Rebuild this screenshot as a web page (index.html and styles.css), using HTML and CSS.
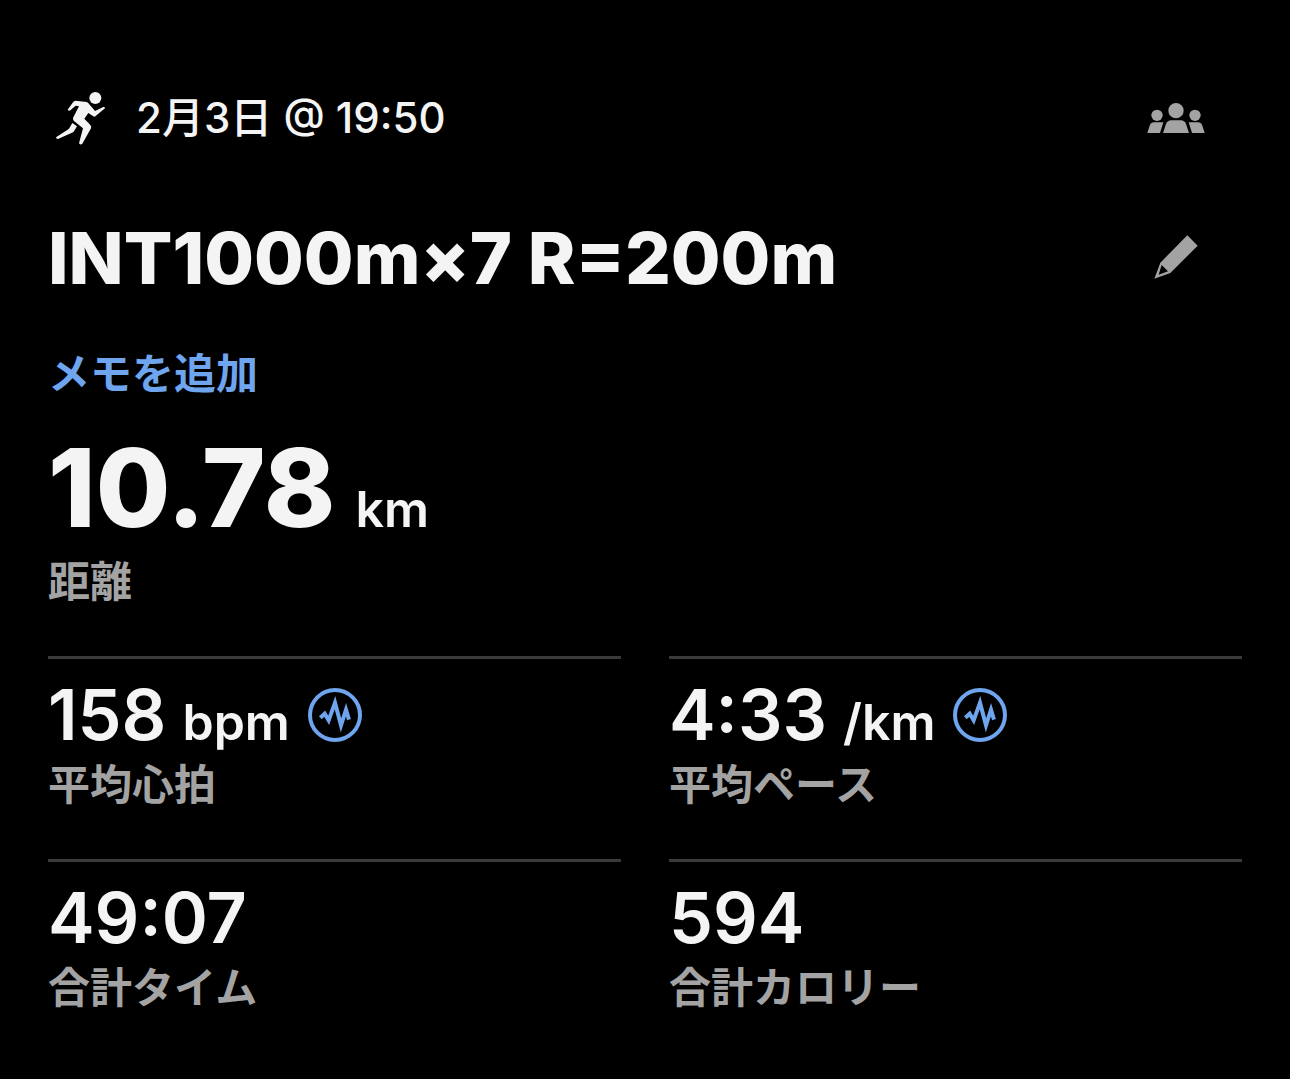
FILE: index.html
```html
<!DOCTYPE html>
<html lang="ja">
<head>
<meta charset="utf-8">
<meta name="viewport" content="width=device-width, initial-scale=1">
<title>INT1000m×7 R=200m</title>
<link rel="stylesheet" href="styles.css">
</head>
<body>
<svg class="sprite" aria-hidden="true">
  <symbol id="pulse" viewBox="30 36 162 162">
    <circle cx="111" cy="117" r="75"/>
    <path d="M67 125 L80 113 L92 133 L111 80 L129 148 L144 101 L153 131"/>
  </symbol>
</svg>
<main class="activity">
  <header class="bar">
    <div class="when">
      <svg class="runner" viewBox="36 24 180 180" aria-hidden="true">
        <circle cx="166" cy="54" r="18"/>
        <path d="M106 62 L140 66 Q145 68 149 74 L165 93 L190 81 Q195 80 195 85 L166 109 Q163 111 160 109 L145 99 L133 116 L151 135 Q155 140 153 145 L127 191 Q121 196 117 190 L129 145 L101 122 Q97 118 100 112 L117 79 L107 77 L91 91 Q86 94 83 89 L98 68 Q101 63 106 62 Z"/>
        <path d="M97 129 L111 139 L101 155 Q98 158 94 159 L54 177 Q48 177 48 172 L83 149 Q88 146 90 141 Z"/>
      </svg>
      <time>2月3日 @ 19:50</time>
    </div>
    <button class="icon-button" type="button" aria-label="公開範囲">
      <svg class="glyph" viewBox="48 -6 180 180" aria-hidden="true">
        <circle cx="138" cy="62" r="23"/>
        <circle cx="81" cy="76" r="17"/>
        <circle cx="195" cy="76" r="17"/>
        <path d="M99 129 L108 102 Q113 91 124 91 H152 Q164 91 168 102 L177 129 Z"/>
        <path d="M52 129 L59 107 Q63 97 72 97 H100 L90 129 Z"/>
        <path d="M224 129 L217 107 Q213 97 204 97 H176 L186 129 Z"/>
      </svg>
    </button>
  </header>
  <div class="bar title-row">
    <h1>INT1000m×7 R=200m</h1>
    <button class="icon-button" type="button" aria-label="編集">
      <svg class="glyph" viewBox="18 24 180 180" aria-hidden="true">
        <path fill-rule="evenodd" d="M142 46 L173 77 L91 159 L43 176 L61 128 Z M65 135 L56 164 L84 154 Z"/>
      </svg>
    </button>
  </div>
  <a class="memo" href="#memo">メモを追加</a>
  <section class="stat distance">
    <p class="value">10.78<span class="unit">km</span></p>
    <p class="label">距離</p>
  </section>
  <div class="grid">
    <section class="stat cell">
      <div class="reading">
        <p class="value">158<span class="unit">bpm</span></p>
        <button class="chart-button" type="button" aria-label="心拍グラフ"><svg class="pulse" aria-hidden="true"><use href="#pulse"/></svg></button>
      </div>
      <p class="label">平均心拍</p>
    </section>
    <section class="stat cell">
      <div class="reading">
        <p class="value">4:33<span class="unit">/km</span></p>
        <button class="chart-button" type="button" aria-label="ペースグラフ"><svg class="pulse" aria-hidden="true"><use href="#pulse"/></svg></button>
      </div>
      <p class="label">平均ペース</p>
    </section>
    <section class="stat cell">
      <p class="value">49:07</p>
      <p class="label">合計タイム</p>
    </section>
    <section class="stat cell">
      <p class="value">594</p>
      <p class="label">合計カロリー</p>
    </section>
  </div>
</main>
</body>
</html>
```
FILE: styles.css
```css
* { box-sizing: border-box; }
body { margin: 0; background: #000; color: #f4f4f4; font-family: Inter, "Noto Sans CJK JP", sans-serif; }
h1, p { margin: 0; }
button { padding: 0; border: 0; background: none; cursor: pointer; }
.sprite { display: none; }
.activity { padding: 80px 48px 16px; }
.bar { display: flex; align-items: center; justify-content: space-between; height: 76px; }
.when { display: flex; align-items: center; gap: 24px; padding-left: 4px; font-size: 42px; line-height: 60px; font-weight: 500; }
.runner { width: 60px; height: 60px; fill: #f4f4f4; }
.icon-button { display: flex; margin-right: 36px; }
.glyph { width: 60px; height: 60px; fill: #a3a3a3; }
.title-row { margin-top: 64px; }
h1 { font-size: 72px; line-height: 80px; font-weight: 800; }
.memo { display: block; width: fit-content; margin-top: 48px; font-size: 42px; line-height: 60px; font-weight: 600; color: #6ea5ee; text-decoration: none; }
.reading { display: flex; align-items: center; gap: 18px; }
.value { display: flex; align-items: baseline; gap: 16px; font-size: 70px; line-height: 80px; font-weight: 600; white-space: nowrap; }
.unit { font-size: 50px; line-height: 60px; font-weight: 600; }
.label { color: #a3a3a3; font-size: 42px; line-height: 60px; font-weight: 600; }
.distance { margin-top: 32px; }
.distance .value { gap: 20px; font-size: 108px; line-height: 104px; font-weight: 800; }
.distance .label { margin-top: 12px; }
.grid { display: grid; grid-template-columns: 1fr 1fr; column-gap: 48px; margin-top: 44px; }
.cell { border-top: 3px solid #3a3a3a; padding: 16px 0 44px; }
.chart-button { display: flex; }
.pulse { width: 54px; height: 54px; fill: none; stroke: #6ea5ee; stroke-width: 12px; }
```
